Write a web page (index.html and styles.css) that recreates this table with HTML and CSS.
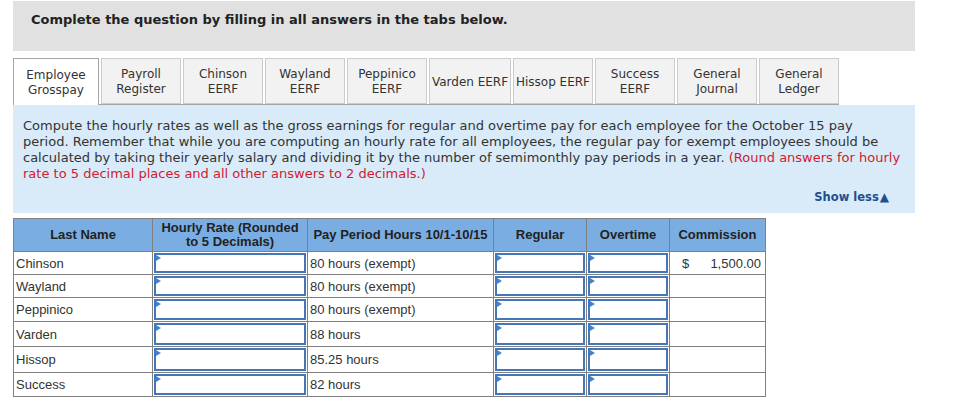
FILE: index.html
```html
<!DOCTYPE html>
<html>
<head>
<meta charset="utf-8">
<link rel="stylesheet" href="styles.css">
</head>
<body>
<div class="page">
  <div class="banner">Complete the question by filling in all answers in the tabs below.</div>

  <div class="tabs">
    <div class="tab active">Employee<br>Grosspay</div>
    <div class="tab">Payroll<br>Register</div>
    <div class="tab">Chinson<br>EERF</div>
    <div class="tab">Wayland<br>EERF</div>
    <div class="tab">Peppinico<br>EERF</div>
    <div class="tab wide">Varden EERF</div>
    <div class="tab">Hissop EERF</div>
    <div class="tab">Success<br>EERF</div>
    <div class="tab">General<br>Journal</div>
    <div class="tab">General<br>Ledger</div>
  </div>

  <div class="panel">
    <p class="instructions">
      <span class="line">Compute the hourly rates as well as the gross earnings for regular and overtime pay for each employee for the October 15 pay</span>
      <span class="line">period. Remember that while you are computing an hourly rate for all employees, the regular pay for exempt employees should be</span>
      <span class="line">calculated by taking their yearly salary and dividing it by the number of semimonthly pay periods in a year. <span class="red">(Round answers for hourly</span></span>
      <span class="line red">rate to 5 decimal places and all other answers to 2 decimals.)</span>
    </p>
    <div class="toggle">Show less<span class="arrow">&#9650;</span></div>
  </div>

  <table class="grid">
    <colgroup>
      <col class="c1"><col class="c2"><col class="c3"><col class="c4"><col class="c5"><col class="c6">
    </colgroup>
    <thead>
      <tr class="rh">
        <th>Last Name</th>
        <th>Hourly Rate (Rounded<br>to 5 Decimals)</th>
        <th>Pay Period Hours 10/1-10/15</th>
        <th>Regular</th>
        <th>Overtime</th>
        <th>Commission</th>
      </tr>
    </thead>
    <tbody>
      <tr class="r1">
        <td>Chinson</td>
        <td class="in"><div class="box"></div></td>
        <td>80 hours (exempt)</td>
        <td class="in"><div class="box"></div></td>
        <td class="in"><div class="box"></div></td>
        <td class="money"><span>$</span><span>1,500.00</span></td>
      </tr>
      <tr class="r2">
        <td>Wayland</td>
        <td class="in"><div class="box"></div></td>
        <td>80 hours (exempt)</td>
        <td class="in"><div class="box"></div></td>
        <td class="in"><div class="box"></div></td>
        <td></td>
      </tr>
      <tr class="r3">
        <td>Peppinico</td>
        <td class="in"><div class="box"></div></td>
        <td>80 hours (exempt)</td>
        <td class="in"><div class="box"></div></td>
        <td class="in"><div class="box"></div></td>
        <td></td>
      </tr>
      <tr class="r4">
        <td>Varden</td>
        <td class="in"><div class="box"></div></td>
        <td>88 hours</td>
        <td class="in"><div class="box"></div></td>
        <td class="in"><div class="box"></div></td>
        <td></td>
      </tr>
      <tr class="r5">
        <td>Hissop</td>
        <td class="in"><div class="box"></div></td>
        <td>85.25 hours</td>
        <td class="in"><div class="box"></div></td>
        <td class="in"><div class="box"></div></td>
        <td></td>
      </tr>
      <tr class="r6">
        <td>Success</td>
        <td class="in"><div class="box"></div></td>
        <td>82 hours</td>
        <td class="in"><div class="box"></div></td>
        <td class="in"><div class="box"></div></td>
        <td></td>
      </tr>
    </tbody>
  </table>
</div>
</body>
</html>
```

FILE: styles.css
```css
html, body {
  margin: 0;
  padding: 0;
  background: #ffffff;
}

.page {
  padding: 1px 0 0 13px;
  width: 902px;
  font-family: "DejaVu Sans", Verdana, sans-serif;
  color: #333333;
}

.banner {
  height: 50px;
  background: #e1e1e1;
  box-sizing: border-box;
  padding: 11px 0 0 18px;
  font-size: 13px;
  font-weight: bold;
  color: #222222;
}

.tabs {
  margin-top: 7px;
  display: flex;
  gap: 2px;
  width: fit-content;
  border-bottom: 1px solid #a5a5a5;
  height: 46px;
}

.tab {
  box-sizing: border-box;
  min-width: 80px;
  height: 46px;
  padding: 2px 1px 0;
  border: 1px solid #cccccc;
  background: #f2f2f2;
  font-size: 12px;
  line-height: 15px;
  text-align: center;
  display: flex;
  align-items: center;
  justify-content: center;
  color: #333333;
  white-space: nowrap;
}

.tab.active {
  width: 86px;
  height: 47px;
  background: #ffffff;
  border-color: #a5a5a5;
  border-bottom: none;
}

.tab.wide {
  min-width: 82px;
}

.panel {
  background: #d9ebf9;
  height: 108px;
  box-sizing: border-box;
  padding: 13px 0 0 10px;
  position: relative;
}

.instructions {
  margin: 0;
  font-size: 13px;
  line-height: 16px;
  color: #333333;
}

.line {
  display: block;
  white-space: nowrap;
}

.red {
  color: #d0202e;
}

.toggle {
  position: absolute;
  right: 26px;
  bottom: 9px;
  font-size: 11.5px;
  font-weight: bold;
  color: #1f4f8f;
}

.arrow {
  font-size: 12px;
  margin-left: 1px;
}

.grid {
  margin-top: 5px;
  border-collapse: collapse;
  table-layout: fixed;
  width: 752px;
  font-family: "Liberation Sans", Arial, sans-serif;
  font-size: 13px;
  color: #333333;
}

.c1 { width: 139px; }
.c2 { width: 155px; }
.c3 { width: 186px; }
.c4 { width: 93px; }
.c5 { width: 83px; }
.c6 { width: 96px; }

.grid th {
  background: #7aaee3;
  border: 1px solid #808080;
  padding: 0 2px;
  font-weight: bold;
  color: #222222;
  line-height: 14px;
}

.grid td {
  border: 1px solid #808080;
  padding: 0 2px;
  vertical-align: middle;
  white-space: nowrap;
  line-height: 15px;
}

.rh { height: 33px; }
.r1 { height: 23px; }
.r2 { height: 23px; }
.r3 { height: 24px; }
.r4 { height: 25px; }
.r5 { height: 26px; }
.r6 { height: 24px; }

.grid td.in {
  padding: 1px;
}

.box {
  box-sizing: border-box;
  width: 100%;
  height: 20px;
  border: 2px solid #4576b5;
  background: #ffffff;
  position: relative;
}

.r3 .box { height: 21px; }
.r4 .box { height: 22px; }
.r5 .box { height: 23px; }
.r6 .box { height: 21px; }

.box::before {
  content: "";
  position: absolute;
  left: 0;
  top: 0;
  border-left: 5px solid #3d84d6;
  border-top: 3px solid transparent;
  border-bottom: 3px solid transparent;
}

.grid td.money {
  padding: 0 4px 0 12px;
}

.money span:first-child {
  float: left;
}

.money span:last-child {
  float: right;
}
```
